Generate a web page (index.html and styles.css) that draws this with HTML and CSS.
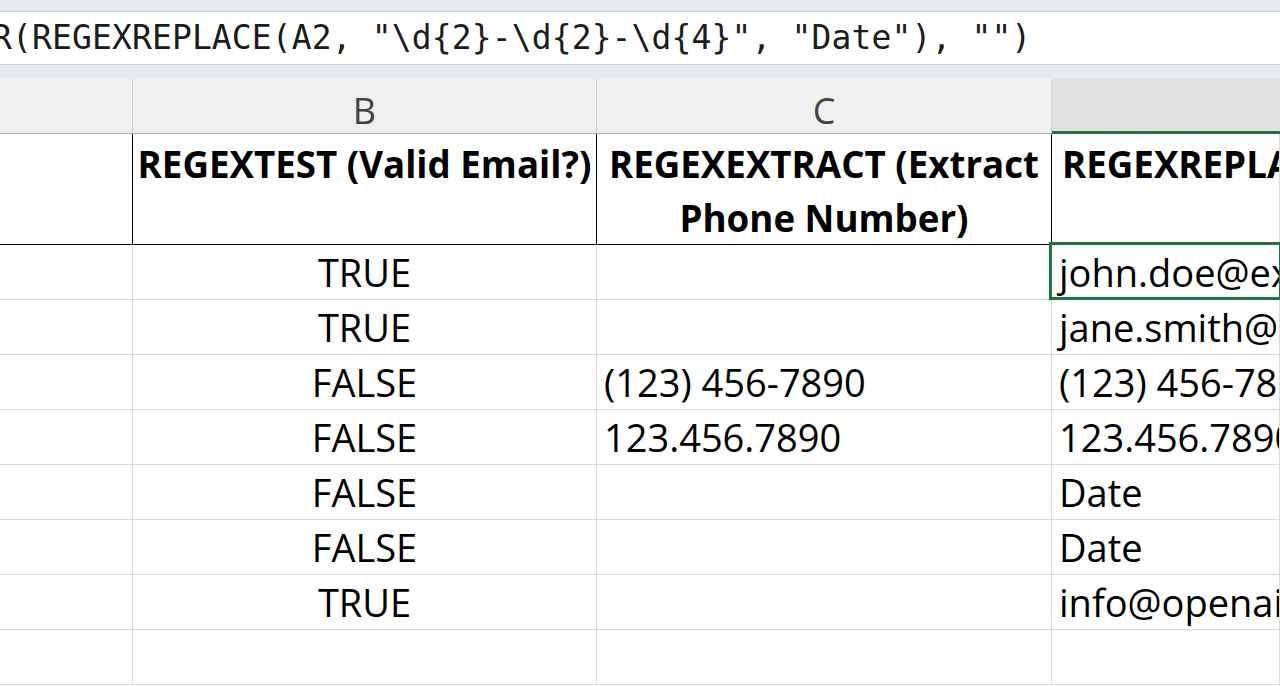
FILE: index.html
```html
<!DOCTYPE html>
<html lang="en">
<head>
<meta charset="utf-8">
<title>Regex functions</title>
<link rel="stylesheet" href="styles.css">
</head>
<body>
<div class="app">
  <div class="chrome-top"></div>
  <div class="formula-bar"><span class="formula">R(REGEXREPLACE(A2, "\d{2}-\d{2}-\d{4}", "Date"), "")</span></div>
  <div class="chrome-gap"></div>
  <div class="sheet">
    <div class="col-head"></div>
    <div class="col-head">B</div>
    <div class="col-head">C</div>
    <div class="col-head selected"></div>

    <div class="cell title edge"></div>
    <div class="cell title edge center">REGEXTEST (Valid Email?)</div>
    <div class="cell title edge center">REGEXEXTRACT (Extract<br>Phone Number)</div>
    <div class="cell title last">REGEXREPLACE (Replace Date Format)</div>

    <div class="cell"></div>
    <div class="cell center">TRUE</div>
    <div class="cell"></div>
    <div class="cell active">john.doe@example.com</div>

    <div class="cell"></div>
    <div class="cell center">TRUE</div>
    <div class="cell"></div>
    <div class="cell">jane.smith@example.com</div>

    <div class="cell"></div>
    <div class="cell center">FALSE</div>
    <div class="cell">(123) 456-7890</div>
    <div class="cell">(123) 456-7890</div>

    <div class="cell"></div>
    <div class="cell center">FALSE</div>
    <div class="cell">123.456.7890</div>
    <div class="cell">123.456.7890</div>

    <div class="cell"></div>
    <div class="cell center">FALSE</div>
    <div class="cell"></div>
    <div class="cell">Date</div>

    <div class="cell"></div>
    <div class="cell center">FALSE</div>
    <div class="cell"></div>
    <div class="cell">Date</div>

    <div class="cell"></div>
    <div class="cell center">TRUE</div>
    <div class="cell"></div>
    <div class="cell">info@openai.com</div>

    <div class="cell"></div>
    <div class="cell"></div>
    <div class="cell"></div>
    <div class="cell"></div>
  </div>
</div>
</body>
</html>
```
FILE: styles.css
```css
html, body {
  margin: 0;
  padding: 0;
  background: #ffffff;
}

body {
  width: 1280px;
  height: 686px;
  overflow: hidden;
  font-family: "Open Sans", "Liberation Sans", sans-serif;
  color: #000;
}

.app {
  display: flex;
  flex-direction: column;
  width: 1280px;
  height: 686px;
  overflow: hidden;
}

.chrome-top {
  height: 12px;
  flex: none;
  box-sizing: border-box;
  background: #e6eaed;
  border-bottom: 1px solid #d2d4d6;
}

.formula-bar {
  height: 53px;
  flex: none;
  box-sizing: border-box;
  background: #ffffff;
  border-bottom: 1px solid #cfd1d3;
  display: flex;
  align-items: flex-start;
  overflow: hidden;
  white-space: pre;
}

.formula {
  margin-left: -8px;
  font-family: "DejaVu Sans Mono", "Liberation Mono", monospace;
  font-size: 33px;
  letter-spacing: 0.12px;
  line-height: 52px;
  color: #1c1c1c;
}

.chrome-gap {
  height: 14px;
  flex: none;
  background: #e6eaed;
}

.sheet {
  flex: 1;
  min-height: 0;
  display: grid;
  grid-template-columns: 133px 464px 455px 228px;
  grid-template-rows: 55px 111px repeat(8, 55px);
  overflow: hidden;
}

.col-head {
  box-sizing: border-box;
  background: #f0f0f0;
  border-right: 1px solid #d3d3d3;
  border-bottom: 1px solid #ababab;
  text-align: center;
  font-size: 36px;
  line-height: 36px;
  padding-top: 14px;
  color: #444444;
  position: relative;
}

.col-head.selected {
  background: #e1e1e1;
  border-right: none;
}

.col-head.selected::after {
  content: "";
  position: absolute;
  left: 0;
  right: 0;
  bottom: -1px;
  height: 3px;
  background: #217346;
}

.cell {
  box-sizing: border-box;
  border-right: 1px solid #dadada;
  border-bottom: 1px solid #dadada;
  display: flex;
  align-items: flex-end;
  padding: 0 7px 1px 7px;
  font-size: 38px;
  line-height: 52px;
  white-space: nowrap;
  overflow: hidden;
  position: relative;
}

.cell.center {
  justify-content: center;
}

.cell.title {
  display: block;
  font-weight: 700;
  font-size: 36.7px;
  line-height: 54px;
  padding: 3px 4px 0 4px;
  border-bottom: 1px solid #000;
}

.cell.title.edge {
  border-right: 1px solid #000;
}

.cell.title.center {
  text-align: center;
}

.cell.title.last {
  padding-left: 10px;
}

.cell.active {
  overflow: visible;
}

.cell.active::after {
  content: "";
  position: absolute;
  left: -3px;
  top: -3px;
  right: -3px;
  bottom: -1px;
  border: 3px solid #217346;
  pointer-events: none;
}
```
